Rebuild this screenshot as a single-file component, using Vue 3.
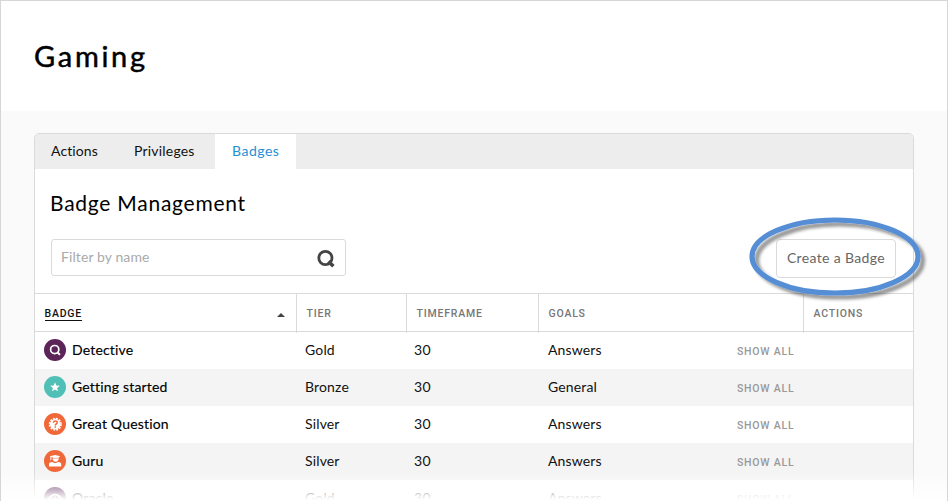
<script setup>
const tabs = ['Actions', 'Privileges', 'Badges']
const rows = [
  { name: 'Detective', icon: 'search', tier: 'Gold', goal: 'Answers' },
  { name: 'Getting started', icon: 'star', tier: 'Bronze', goal: 'General' },
  { name: 'Great Question', icon: 'question', tier: 'Silver', goal: 'Answers' },
  { name: 'Guru', icon: 'guru', tier: 'Silver', goal: 'Answers' },
  { name: 'Oracle', icon: 'oracle', tier: 'Gold', goal: 'Answers' },
]
</script>

<template>
  <div class="page">
    <header class="top"><h1>Gaming</h1></header>
    <main class="content">
      <section class="panel">
        <nav class="tabs">
          <a v-for="t in tabs" :key="t" class="tab" :class="[t.toLowerCase(), { active: t === 'Badges' }]">{{ t }}</a>
        </nav>
        <h2>Badge Management</h2>
        <div class="toolbar">
          <div class="filter">
            <span>Filter by name</span>
            <svg width="18" height="18" viewBox="0 0 18 18">
              <circle cx="8.4" cy="8" r="6.6" fill="none" stroke="#444" stroke-width="2.8" />
              <path d="M11.4 11.4L16.4 16.2" stroke="#444" stroke-width="3.6" />
            </svg>
          </div>
          <div class="create">
            <button>Create a Badge</button>
            <svg class="ring" width="186" height="94" viewBox="0 0 186 94">
              <defs>
                <filter id="shadow" x="-10%" y="-15%" width="125%" height="135%">
                  <feDropShadow dx="4.5" dy="4" stdDeviation="1.8" flood-color="#000" flood-opacity="0.4" />
                </filter>
              </defs>
              <ellipse cx="88" cy="42.5" rx="83" ry="36.5" fill="none" stroke="#558ed5" stroke-width="5.2" filter="url(#shadow)" />
            </svg>
          </div>
        </div>
        <div class="grid head">
          <div class="sorted"><span>BADGE</span><svg width="8" height="4" viewBox="0 0 8 4"><path d="M0 4L4 0L8 4Z" fill="#444" /></svg></div>
          <div>TIER</div>
          <div>TIMEFRAME</div>
          <div>GOALS</div>
          <div>ACTIONS</div>
        </div>
        <div class="rows">
          <div v-for="r in rows" :key="r.name" class="grid row">
            <div class="name">
              <svg width="22" height="22" viewBox="0 0 22 22">
                <g v-if="r.icon === 'search'">
                  <circle cx="11" cy="11" r="11" fill="#5c2458" />
                  <circle cx="10.7" cy="10.6" r="4.1" fill="none" stroke="#fff" stroke-width="1.7" />
                  <path d="M13.2 13.2L16 15.8" stroke="#fff" stroke-width="1.9" />
                </g>
                <g v-else-if="r.icon === 'star'">
                  <circle cx="11" cy="11" r="11" fill="#50c0b7" />
                  <path d="M11 6.2L12.3 9.5L15.8 9.7L13.1 11.9L14 15.3L11 13.4L8 15.3L8.9 11.9L6.2 9.7L9.7 9.5Z" fill="#fff" />
                </g>
                <g v-else-if="r.icon === 'question'">
                  <circle cx="11" cy="11" r="11" fill="#f0683a" />
                  <circle cx="11.3" cy="11.2" r="5.4" fill="#fff" />
                  <circle cx="11.3" cy="11.2" r="5.8" fill="none" stroke="#fff" stroke-width="1.5" stroke-dasharray="1.8 1.236" />
                  <path d="M9.4 9.7Q9.5 8 11.3 8Q13.2 8 13.2 9.5Q13.2 10.4 12.2 11Q11.3 11.5 11.3 12.4M11.3 13.3V14.8" fill="none" stroke="#f0683a" stroke-width="1.5" />
                </g>
                <g v-else-if="r.icon === 'guru'">
                  <circle cx="11" cy="11" r="11" fill="#f0683a" />
                  <path d="M5.8 6.2L11.2 5L16.4 6.2L14.6 7.2V9.6Q13.8 11.8 11.6 11.8Q9.6 11.8 8.8 9.8V7.4L7.4 7V9.8L6.4 10.4V6.8Z" fill="#fff" />
                  <path d="M5 16.4V13.8Q5.2 12.3 8 12.1L11.2 13.2L14.2 12.1Q17 12.3 17.2 13.8V16.4Z" fill="#fff" />
                  <path d="M9 8.3H14.2" fill="none" stroke="#f0683a" stroke-width=".5" />
                </g>
                <g v-else>
                  <circle cx="11" cy="11" r="11" fill="#5c2458" />
                  <path d="M4.5 11.3Q11 3.5 17.5 11.3Q11 18.5 4.5 11.3Z" fill="none" stroke="#fff" stroke-width="1.5" />
                  <circle cx="11" cy="10.8" r="3.4" fill="none" stroke="#fff" stroke-width="1.2" />
                  <path d="M11 8.5V13" stroke="#fff" stroke-width="1.3" />
                </g>
              </svg>
              <span>{{ r.name }}</span>
            </div>
            <div>{{ r.tier }}</div>
            <div class="time">30</div>
            <div class="goal"><span>{{ r.goal }}</span><a>SHOW ALL</a></div>
            <div></div>
          </div>
        </div>
      </section>
    </main>
    <div class="fade"></div>
  </div>
</template>

<style>
body { margin: 0; overflow: hidden; }
</style>

<style scoped>
* { box-sizing: border-box; }
.page { position: relative; width: 948px; height: 501px; overflow: hidden; border: 1px solid #d6d6d6; border-bottom: 0; background: #fafafa; color: #000; font: 14px/20px Lato, "Liberation Sans", sans-serif; }
.top { height: 110px; padding: 37px 33px 0; background: #fff; }
h1 { margin: 0; font-size: 29px; line-height: 36px; font-weight: 400; letter-spacing: 2.7px; -webkit-text-stroke: .5px #000; }
.content { padding: 22px 33px 0; }
.panel { width: 880px; height: 400px; border: 1px solid #dadada; border-radius: 5px 5px 0 0; background: #fff; }
.tabs { display: flex; height: 35px; background: #ededed; border-radius: 4px 4px 0 0; }
.tab { padding: 0 16px; line-height: 33px; letter-spacing: .1px; color: #111; }
.actions { width: 83px; }
.privileges { width: 97px; letter-spacing: .2px; }
.badges { width: 81px; padding-left: 17px; letter-spacing: .5px; }
.tab.active { background: #fff; color: #1e90d8; }
h2 { margin: 0; padding: 19px 15px 0; height: 70px; font-size: 21px; line-height: 30px; font-weight: 400; letter-spacing: .75px; }
.toolbar { display: flex; justify-content: space-between; height: 54px; padding: 0 17px 0 16px; }
.filter { display: flex; align-items: center; justify-content: space-between; width: 295px; height: 37px; padding: 0 10.5px 0 9px; border: 1px solid #dadada; border-radius: 3px; color: #aaa; }
.filter svg { margin-top: 2px; }
.filter span { margin-top: -2px; letter-spacing: .1px; }
.create { position: relative; }
.create button { display: block; width: 120px; height: 39px; padding: 0 0 2px; border: 1px solid #dadada; border-radius: 4px; background: #fff; color: #666; font: inherit; letter-spacing: .35px; white-space: nowrap; }
.ring { position: absolute; left: -29px; top: -25px; overflow: visible; }
.grid { display: grid; grid-template-columns: 261px 110px 132px 265px 110px; }
.head { height: 39px; border-top: 1px solid #dadada; border-bottom: 1px solid #dadada; font: 500 10.5px/39px Roboto, sans-serif; letter-spacing: .8px; color: #777; }
.head > div { padding-left: 9.5px; border-left: 1px solid #dadada; }
.head > .sorted { display: flex; align-items: center; justify-content: space-between; padding: 0 11px 0 9.5px; border-left: 0; color: #111; }
.sorted span { margin-top: 1px; line-height: 12px; border-bottom: 1px solid #111; }
.sorted svg { margin-top: 3px; }
.row { height: 37px; line-height: 36px; color: #111; letter-spacing: .15px; }
.row:nth-child(even) { background: #f4f4f4; }
.row > div { padding-left: 9px; }
.name { display: flex; align-items: center; gap: 6px; height: 36px; color: #000; }
.name span { height: 36px; line-height: 35px; letter-spacing: .18px; -webkit-text-stroke: .15px #000; }
.row > .time { padding-left: 8px; letter-spacing: .4px; }
.row > .goal { display: flex; justify-content: space-between; padding: 0 8.5px 0 10px; }
.goal a { font: 500 10.5px/39px Roboto, sans-serif; letter-spacing: .8px; color: #999; }
.fade { position: absolute; left: -1px; right: -1px; bottom: 0; height: 30px; background: linear-gradient(rgba(255,255,255,0), #fff 96%); }
</style>
